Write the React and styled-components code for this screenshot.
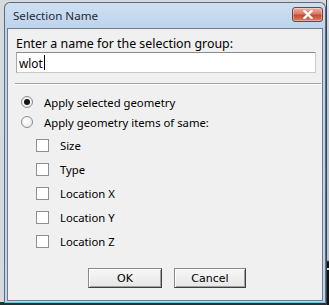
import React from "react";
import styled, { createGlobalStyle } from "styled-components";

const Global = createGlobalStyle`
  html, body { margin: 0; padding: 0; }
  body { background: #d6dade; width: 329px; height: 305px; overflow: hidden; font-family: "Noto Sans", "DejaVu Sans", sans-serif; }
`;

const Page = styled.div`
  display: flex;
  align-items: flex-start;
  width: 329px;
  height: 305px;
  background: linear-gradient(to bottom, #d6dade 302px, #2a2f36 302px);
`;

const Window = styled.div`
  box-sizing: border-box;
  margin: 2px 0 0 4px;
  width: 322px;
  height: 301px;
  border: 1px solid #5d6a7a;
  border-bottom: 1px solid #6fc6e4;
  border-radius: 6px 6px 0 0;
  background: linear-gradient(#cfdff2, #bdd3ed 26px, #bfd4ee);
  display: flex;
  flex-direction: column;
  padding: 0 2px 1px 2px;
`;

const TitleBar = styled.div`
  height: 25px;
  display: flex;
  align-items: flex-start;
  justify-content: space-between;
`;

const Title = styled.span`
  font-size: 11.6px;
  line-height: 16px;
  margin-top: 5px;
  color: #1e2a38;
  padding-left: 6px;
`;

const CloseBtn = styled.div`
  box-sizing: border-box;
  width: 31px;
  height: 15px;
  margin-top: 4px;
  border: 1px solid #8a3b30;
  border-radius: 3px;
  background: linear-gradient(#eeb2a4, #d97a64 45%, #c24a31 55%, #d8806a);
  display: flex;
  align-items: center;
  justify-content: center;
  box-shadow: inset 0 0 0 1px rgba(255, 255, 255, 0.35);
`;

const Client = styled.div`
  flex: 1;
  border: 1px solid #6d7b8d;
  background: #f0f0f0;
  display: flex;
  flex-direction: column;
`;

const Top = styled.div`
  padding: 7px 6px 0 8px;
  display: flex;
  flex-direction: column;
`;

const Label = styled.div`
  font-size: 12.4px;
  color: #000;
  line-height: 15px;
`;

const Input = styled.div`
  margin-top: 1px;
  height: 21px;
  box-sizing: border-box;
  border: 1px solid #c7c9cc;
  border-top-color: #8a8a8a;
  border-left-color: #a8a8a8;
  background: #fff;
  font-size: 11.8px;
  padding-left: 2px;
  display: flex;
  align-items: center;
`;

const Caret = styled.span`
  display: inline-block;
  width: 1px;
  height: 15px;
  background: #000;
  margin-left: 1px;
`;

const Separator = styled.div`
  margin: 10px 1px 0 7px;
  height: 0;
  border-top: 1px solid #a0a0a0;
  border-bottom: 1px solid #fff;
`;

const Options = styled.div`
  display: flex;
  flex-direction: column;
  padding: 7px 0 0 13px;
`;

const Checks = styled.div`
  display: flex;
  flex-direction: column;
  margin-top: 1px;
  padding-left: 15px;
`;

const Row = styled.div`
  display: flex;
  align-items: center;
  height: ${(p) => (p.$tall ? 24 : 20)}px;
  font-size: 11.3px;
  color: #000;
`;

const Radio = styled.span`
  box-sizing: border-box;
  width: 12px;
  height: 12px;
  border-radius: 50%;
  border: 1px solid #8b8b8b;
  background: radial-gradient(circle at 40% 40%, #fff, #e4e4e4);
  display: flex;
  align-items: center;
  justify-content: center;
  margin-right: 11px;
  &::after {
    content: "";
    width: 6px;
    height: 6px;
    border-radius: 50%;
    background: ${(p) => (p.$checked ? "#151515" : "transparent")};
  }
`;

const Check = styled.span`
  width: 11px;
  height: 11px;
  border: 1px solid #8e8f8f;
  background: #fff;
  margin-right: 11px;
`;

const Buttons = styled.div`
  margin-top: auto;
  margin-bottom: 12px;
  display: flex;
  gap: 12px;
  padding-left: 80px;
`;

const Button = styled.button`
  width: ${(p) => p.$w}px;
  height: 20px;
  box-sizing: border-box;
  border: 1px solid #8a8a8a;
  border-right-color: #3f3f3f;
  border-bottom-color: #3f3f3f;
  background: linear-gradient(#f7f7f7, #e6e6e6);
  box-shadow: inset 1px 1px 0 #fff, inset -1px -1px 0 #a0a0a0;
  font-family: "DejaVu Sans", sans-serif;
  font-size: 11px;
  color: #000;
  padding: 0;
`;

const RightStrip = styled.div`
  flex: 1;
  align-self: stretch;
  border-left: 1px solid #3b4350;
  background: linear-gradient(#dfe8f2, #c4ccd6 40px, #bcc3cb 260px, #111 262px, #111 268px, #e0e0e0 268px, #e0e0e0 270px, #111 270px);
`;

const options = ["Size", "Type", "Location X", "Location Y", "Location Z"];

export default function App() {
  return (
    <>
      <Global />
      <Page>
        <Window>
          <TitleBar>
            <Title>Selection Name</Title>
            <CloseBtn>
              <svg width="12" height="9" viewBox="0 0 12 9">
                <path d="M2.5 1 L9.5 8 M9.5 1 L2.5 8" stroke="#fff" strokeWidth="2.3" strokeLinecap="square" />
              </svg>
            </CloseBtn>
          </TitleBar>
          <Client>
            <Top>
              <Label>Enter a name for the selection group:</Label>
              <Input>
                wlot<Caret />
              </Input>
            </Top>
            <Separator />
            <Options>
              <Row>
                <Radio $checked />
                Apply selected geometry
              </Row>
              <Row>
                <Radio />
                Apply geometry items of same:
              </Row>
              <Checks>
                {options.map((o) => (
                  <Row key={o} $tall>
                    <Check />
                    {o}
                  </Row>
                ))}
              </Checks>
            </Options>
            <Buttons>
              <Button $w={74}>OK</Button>
              <Button $w={72}>Cancel</Button>
            </Buttons>
          </Client>
        </Window>
        <RightStrip />
      </Page>
    </>
  );
}
